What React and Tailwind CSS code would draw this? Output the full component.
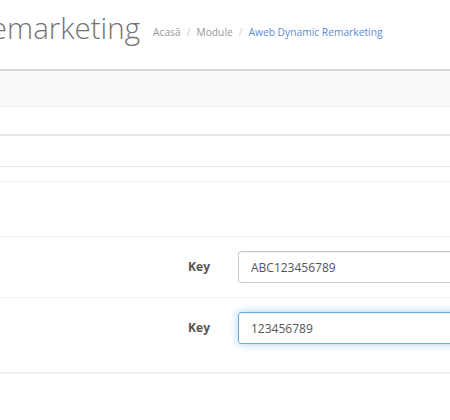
export default function App() {
  return (
    <div className="w-[450px] h-[420px] overflow-hidden bg-white text-[12px] text-[#555] font-['Open_Sans','Liberation_Sans',sans-serif]">
      <div className="h-[69px] flex items-start pt-[8px]">
        <div className="w-[140px] shrink-0 overflow-hidden flex justify-end">
          <h1 className="shrink-0 whitespace-nowrap text-[29.5px] leading-[40px] font-light text-[#737373]">
            Aweb Dynamic Remarketing
          </h1>
        </div>
        <ol className="flex items-baseline mt-[17px] pl-[13px] text-[10.25px] leading-[15px] whitespace-nowrap text-[#999]">
          <li>Acasă</li>
          <li className="px-[6px] text-[#ccc]">/</li>
          <li>Module</li>
          <li className="px-[6px] text-[#ccc]">/</li>
          <li className="text-[#5a8bd2]">Aweb Dynamic Remarketing</li>
        </ol>
      </div>

      <div className="h-[38px] border-t-2 border-b border-t-[#d6d6d6] border-b-[#ececec] bg-[#fafafa]" />
      <div className="h-[27px]" />
      <div className="h-[32px] border-t-2 border-[#e6e6e6]" />
      <div className="h-[15px] border-t border-[#e8e8e8]" />
      <div className="h-[55px] border-t border-[#f0f0f0]" />

      <div className="flex items-center h-[61px] border-t border-[#f0f0f0]">
        <label className="w-[210px] shrink-0 text-right font-bold text-[#555]">Key</label>
        <input
          readOnly
          value="ABC123456789"
          className="ml-[28px] w-[300px] shrink-0 h-[32px] px-[12px] rounded-[3px] border border-[#ccc] text-[12px] text-[#555] shadow-[inset_0_1px_1px_rgba(0,0,0,0.075)] outline-none"
        />
      </div>

      <div className="flex items-start h-[75px] pt-[14px] border-t border-[#efefef]">
        <label className="w-[210px] shrink-0 text-right font-bold text-[#555] leading-[32px]">Key</label>
        <input
          readOnly
          value="123456789"
          className="ml-[28px] w-[300px] shrink-0 h-[32px] px-[12px] rounded-[3px] border border-[#66afe9] text-[12px] text-[#555] shadow-[inset_0_1px_1px_rgba(0,0,0,0.075),0_0_8px_rgba(102,175,233,0.6)] outline-none"
        />
      </div>

      <div className="border-t-2 border-[#eee]" />
    </div>
  );
}
